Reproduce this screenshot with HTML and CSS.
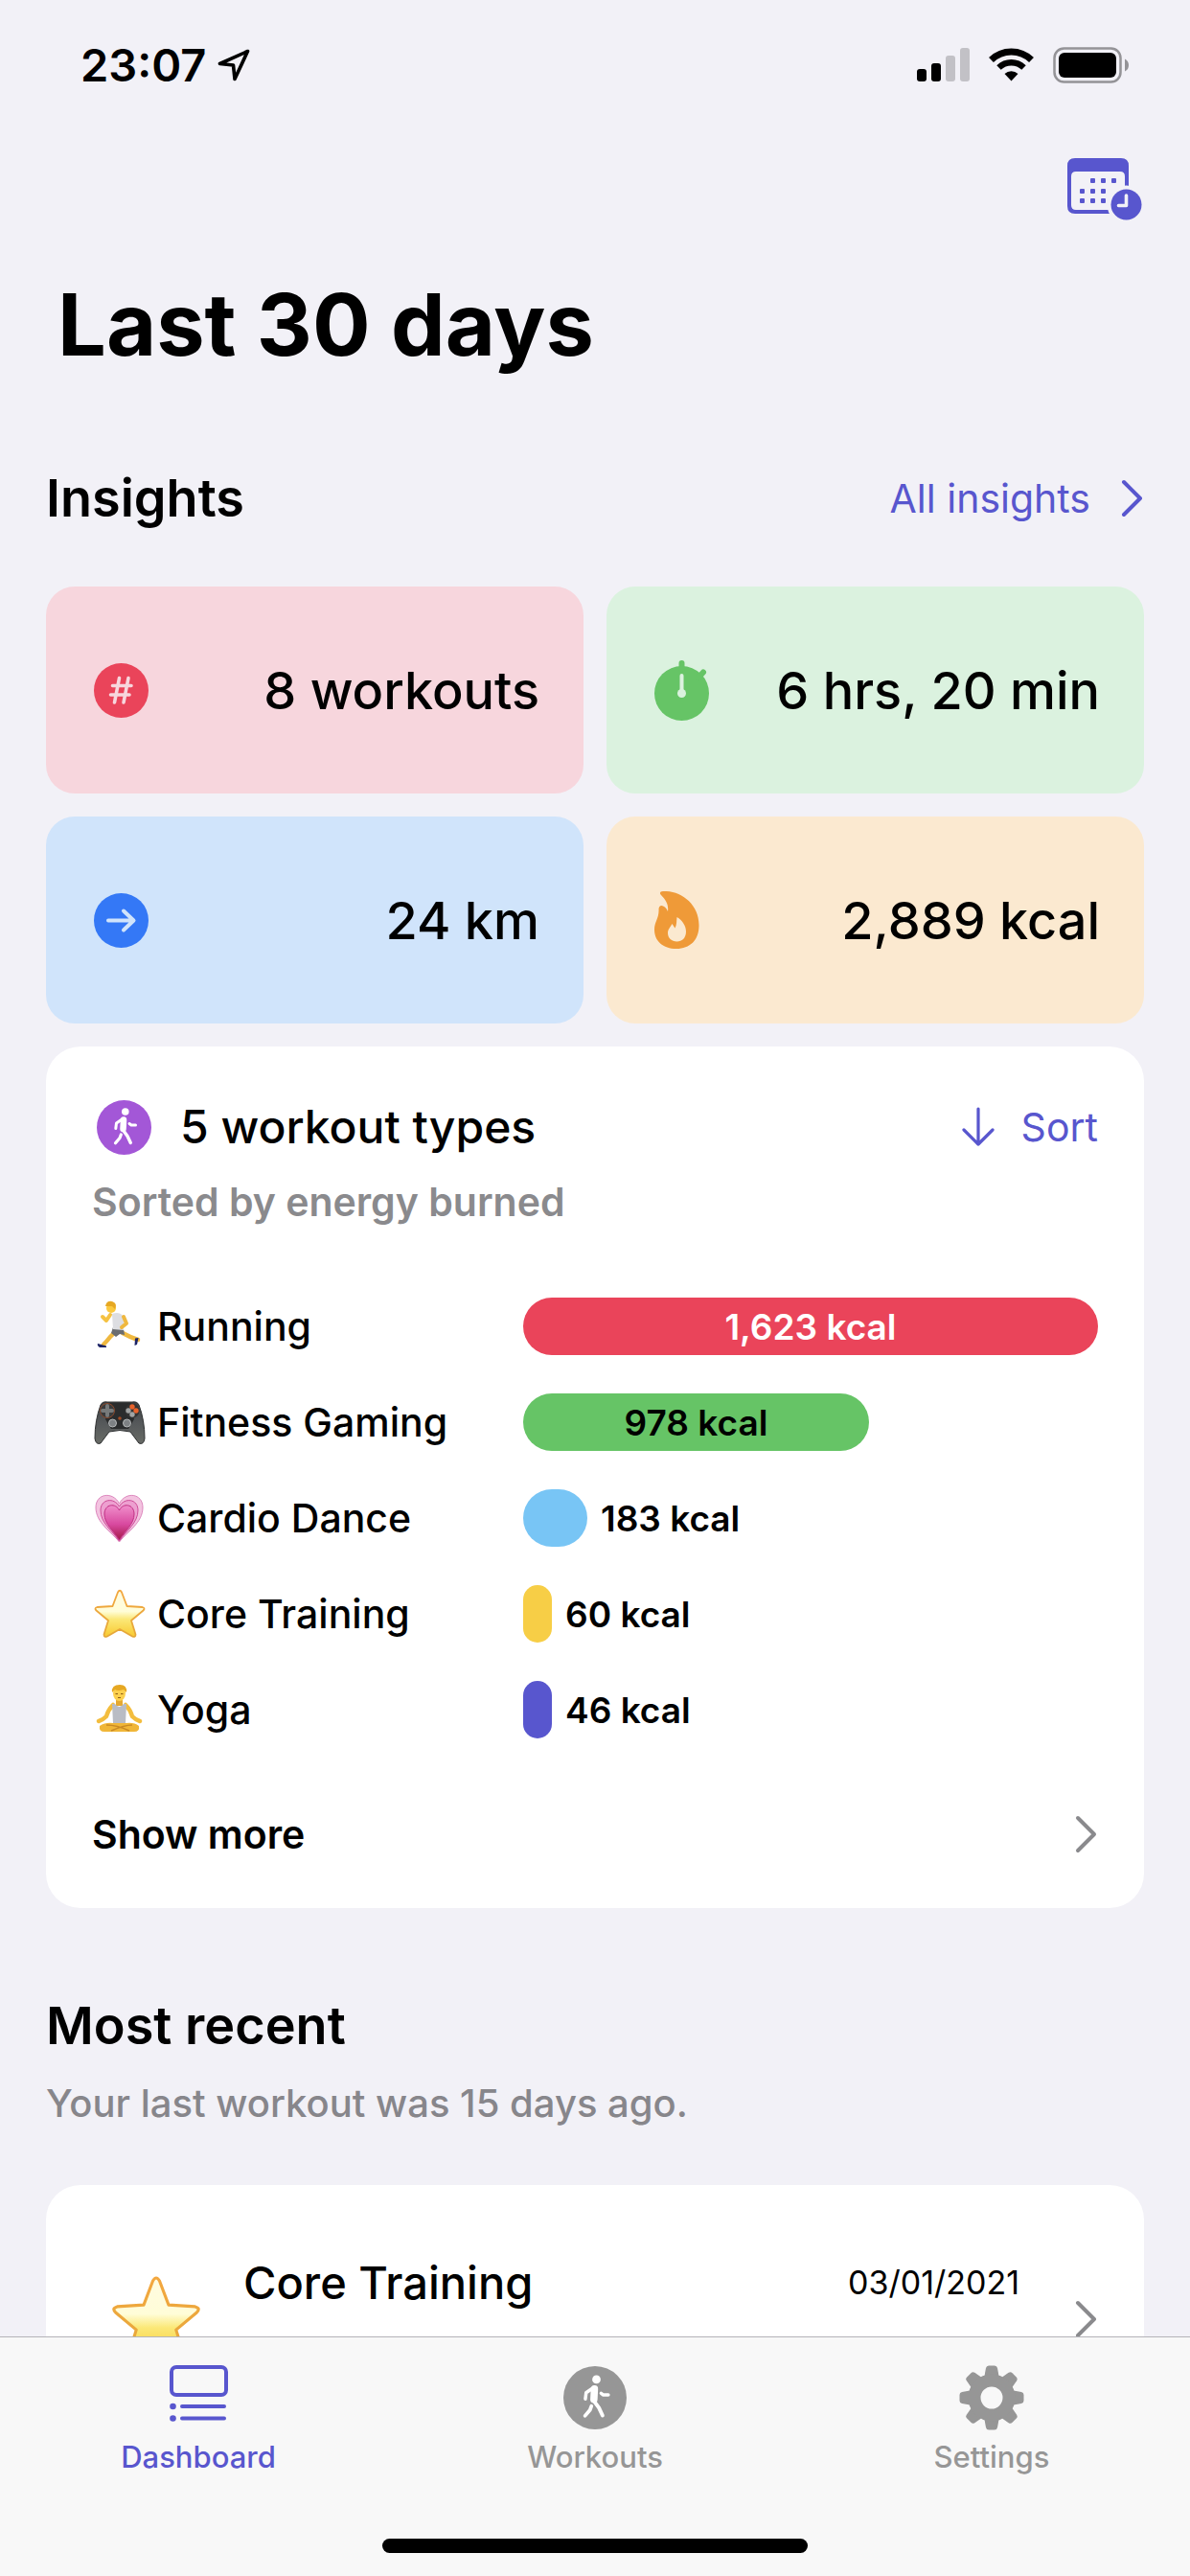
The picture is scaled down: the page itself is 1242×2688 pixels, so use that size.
FILE: index.html
```html
<!DOCTYPE html>
<html lang="en">
<head>
<meta charset="utf-8">
<meta name="viewport" content="width=device-width, initial-scale=1">
<title>Dashboard</title>
<link rel="stylesheet" href="styles.css">
</head>
<body>
<svg class="defs" aria-hidden="true">
  <defs>
    <linearGradient id="star-fill" x1="0" y1="0" x2="0" y2="1">
      <stop offset="0" stop-color="#fffbe0"/><stop offset=".45" stop-color="#fffdd8"/><stop offset=".62" stop-color="#fbe878"/><stop offset="1" stop-color="#f8c92f"/>
    </linearGradient>
    <linearGradient id="star-edge" x1="0" y1="0" x2="0" y2="1">
      <stop offset="0" stop-color="#f3a73f"/><stop offset="1" stop-color="#e5a83a"/>
    </linearGradient>
    <linearGradient id="heart-fill" x1="0" y1="0" x2="0" y2="1">
      <stop offset="0" stop-color="#f08ecb"/><stop offset=".55" stop-color="#d8499f"/><stop offset="1" stop-color="#a31745"/>
    </linearGradient>
    <linearGradient id="pad-fill" x1="0" y1="0" x2="0" y2="1">
      <stop offset="0" stop-color="#3c3f40"/><stop offset=".5" stop-color="#55585a"/><stop offset="1" stop-color="#686b66"/>
    </linearGradient>
    <symbol id="star" viewBox="0 0 54 52">
      <path d="M25 3.500 Q27 0 29 3.500 L34.500 18 L50.500 19 Q54 20 51.500 22.500 L39 33 L43.500 47.500 Q43.500 51 40 49.500 L27 42 L14 49.500 Q10.500 51 10.500 47.500 L15 33 L2.500 22.500 Q0 20 3.500 19 L19.500 18 Z" fill="url(#star-fill)" stroke="url(#star-edge)" stroke-width="1.800" stroke-linejoin="round"/>
    </symbol>
    <symbol id="walk" viewBox="0 0 57 57">
      <circle cx="28.500" cy="28.500" r="28.500" fill="currentColor"/>
      <g fill="none" stroke="#fff" stroke-linecap="round" stroke-linejoin="round">
        <circle cx="29.800" cy="12" r="3.800" fill="#fff" stroke="none"/>
        <path d="M28 20.500 L27.500 30" stroke-width="6.500"/>
        <path d="M25.500 20.500 L20.500 24 L19.800 29.500" stroke-width="3"/>
        <path d="M34 24.500 L36 26 L40.500 26" stroke-width="3"/>
        <path d="M28 32 L32 37.500 L35.300 44.500" stroke-width="3.400"/>
        <path d="M25.300 36 L24 39.500 L19.500 44.800" stroke-width="3.200"/>
      </g>
    </symbol>
    <symbol id="chevron" viewBox="0 0 24 40">
      <path d="M3 3 L20 20 L3 37" fill="none" stroke="currentColor" stroke-width="4" stroke-linecap="round" stroke-linejoin="round"/>
    </symbol>
  </defs>
</svg>

<div class="app">
  <div class="status">
    <div class="status-time">
      <span>23:07</span>
      <svg width="34" height="34" viewBox="0 0 34 34" aria-hidden="true"><path d="M31.500 2.500 L2.500 15.500 L16.500 17 L18 31.500 Z" fill="none" stroke="#000" stroke-width="3.600" stroke-linejoin="round"/></svg>
    </div>
    <svg width="222" height="38" viewBox="0 0 222 38" aria-hidden="true">
      <rect x="1" y="23" width="10" height="13" rx="3"/>
      <rect x="16" y="17" width="10" height="19" rx="3"/>
      <rect x="31" y="9" width="10" height="27" rx="3" fill="#c2c1c6"/>
      <rect x="46" y="1" width="10" height="35" rx="3" fill="#c2c1c6"/>
      <g fill="none" stroke="#000" stroke-width="7">
        <path d="M78.500 13.500 A30 30 0 0 1 120.500 13.500"/>
        <path d="M86.500 21.500 A19 19 0 0 1 112.500 21.500" stroke-width="6.500"/>
      </g>
      <path d="M92.500 28 A10.500 10.500 0 0 1 106.500 28 L99.500 35.500 Z"/>
      <rect x="144.500" y="1.500" width="69" height="35" rx="10" fill="none" stroke="#949397" stroke-width="2.500"/>
      <rect x="149" y="6" width="60" height="26" rx="6"/>
      <path d="M218 12.500 Q222 14.500 222 19 Q222 23.500 218 25.500 Z" fill="#949397"/>
    </svg>
  </div>

  <main class="content">
    <header class="head">
      <button class="icon-button" type="button" aria-label="Change period">
        <svg width="80" height="66" viewBox="0 0 80 66" aria-hidden="true">
          <path fill="#5856ce" fill-rule="evenodd" d="M8 0 H56 Q64 0 64 8 V50 Q64 58 56 58 H8 Q0 58 0 50 V8 Q0 0 8 0 Z M9 14 Q4 14 4 19 V49 Q4 54 9 54 H55 Q60 54 60 49 V19 Q60 14 55 14 Z"/>
          <g fill="#5856ce">
            <rect x="24" y="21" width="5" height="5" rx="1"/><rect x="35" y="21" width="5" height="5" rx="1"/><rect x="46" y="21" width="5" height="5" rx="1"/>
            <rect x="13" y="32" width="5" height="5" rx="1"/><rect x="24" y="32" width="5" height="5" rx="1"/><rect x="35" y="32" width="5" height="5" rx="1"/>
            <rect x="13" y="42" width="5" height="5" rx="1"/><rect x="24" y="42" width="5" height="5" rx="1"/><rect x="35" y="42" width="5" height="5" rx="1"/>
          </g>
          <circle cx="61.500" cy="48.500" r="20" fill="#f2f1f7"/>
          <circle cx="61.500" cy="48.500" r="16" fill="#5856ce"/>
          <path d="M61.500 39 V49.500 H53.500" fill="none" stroke="#f2f1f7" stroke-width="3.600" stroke-linecap="round" stroke-linejoin="round"/>
        </svg>
      </button>
      <h1>Last 30 days</h1>
    </header>

    <section class="insights">
      <div class="section-head">
        <h2>Insights</h2>
        <a class="link" href="#insights">All insights <svg class="chevron" aria-hidden="true"><use href="#chevron"/></svg></a>
      </div>
      <div class="tiles">
        <div class="tile tile-red">
          <svg width="57" height="57" viewBox="0 0 57 57" aria-hidden="true"><circle cx="28.500" cy="28.500" r="28.500" fill="#ea445a"/><path d="M26.500 15.500 L21.500 41 M36 15.500 L31 41 M19.500 23.500 H39 M17.500 33 H37" stroke="#f7d6dd" stroke-width="3.600" stroke-linecap="round" fill="none"/></svg>
          <span>8 workouts</span>
        </div>
        <div class="tile tile-green">
          <svg width="57" height="63" viewBox="0 0 57 63" aria-hidden="true"><circle cx="28.500" cy="34.500" r="28.500" fill="#66c466"/><path d="M28.500 3 V9 M51 12.500 L46 18" stroke="#66c466" stroke-width="6" stroke-linecap="round"/><path d="M28.500 16 V32" stroke="#dbf2df" stroke-width="4" stroke-linecap="round"/><circle cx="28.500" cy="34.500" r="4.500" fill="#dbf2df"/></svg>
          <span>6 hrs, 20 min</span>
        </div>
        <div class="tile tile-blue">
          <svg width="57" height="57" viewBox="0 0 57 57" aria-hidden="true"><circle cx="28.500" cy="28.500" r="28.500" fill="#3478f6"/><path d="M15 28.500 H41 M31 18.500 L41.500 28.500 L31 38.500" stroke="#d0e4fb" stroke-width="4" stroke-linecap="round" stroke-linejoin="round" fill="none"/></svg>
          <span>24 km</span>
        </div>
        <div class="tile tile-orange">
          <svg width="47" height="60" viewBox="0 0 47 60" aria-hidden="true"><path fill="#ef9a38" d="M9 0 C28 -1 47 14 46.500 36 C46.500 51 37 60 23 60 C9 60 0 52 0 40 C0 32 5 28 4.500 19 C4.500 13 11 14 14 21 C15 14 12 9 7 4 C5 2 6 0 9 0 Z"/><path fill="#fbe9d0" d="M23.500 27 C29 30 33 36 33 42 C33 49 28.500 52.500 23.500 52.500 C18 52.500 14 49 14 43.500 C14 39.500 17 37 18.500 34 L21.500 38.500 C23.500 35 23 31 23.500 27 Z"/></svg>
          <span>2,889 kcal</span>
        </div>
      </div>

      <div class="card types">
        <div class="types-head">
          <svg class="walk-icon" aria-hidden="true"><use href="#walk"/></svg>
          <h3>5 workout types</h3>
          <button class="link sort" type="button"><svg width="34" height="42" viewBox="0 0 34 42" aria-hidden="true"><path d="M17 2 V39 M2 24 L17 39 L32 24" fill="none" stroke="currentColor" stroke-width="3.200" stroke-linecap="round" stroke-linejoin="round"/></svg>Sort</button>
        </div>
        <p class="types-note">Sorted by energy burned</p>
        <ul class="rows">
          <li class="row">
            <svg class="emoji" viewBox="0 0 54 54" aria-hidden="true">
              <path d="M22 33 L17 38 Q14 42 10 46" fill="none" stroke="#efb83f" stroke-width="4.500" stroke-linecap="round" stroke-linejoin="round"/>
              <path d="M30 34 Q37 38 46 41" fill="none" stroke="#efb83f" stroke-width="4.500" stroke-linecap="round"/>
              <path d="M4 45 L13 47.500 V49 L6 49 Q3 47 4 45 Z M43 39.500 L46.500 39 L45 46 L42.500 47 Z" fill="#1c2466"/>
              <path d="M20 28 L31 30 L32 36 L27 35 L23 38 L18 34 Z" fill="#6b6d70"/>
              <path d="M19 14 Q27 11 31 17 L31 31 L20 30 Z" fill="#dddee2"/>
              <path d="M17 15 L13 21 L9 17" fill="none" stroke="#f5c242" stroke-width="4" stroke-linecap="round" stroke-linejoin="round"/>
              <path d="M31 17 L34 24 L29 28" fill="none" stroke="#efb83f" stroke-width="4" stroke-linecap="round" stroke-linejoin="round"/>
              <circle cx="18" cy="8" r="5" fill="#fbc93f"/><path d="M12 6 Q13 0 19 1 Q25 3 22 9 L19 6 Z" fill="#e6a823"/>
            </svg>
            <span class="label">Running</span>
            <span class="bar bar-red" style="width: 600px">1,623 kcal</span>
          </li>
          <li class="row">
            <svg class="emoji" viewBox="0 0 54 54" aria-hidden="true">
              <path d="M7 9 Q9 5 14 6 L40 6 Q45 5 47 9 Q53 25 53 44 Q52 51 47 49 L38 37 Q27 34 16 37 L7 49 Q2 51 1 44 Q1 25 7 9 Z" fill="url(#pad-fill)" stroke="#2e3031" stroke-width="1"/>
              <path d="M15 7 H39 L42 24 L36 34 H18 L12 24 Z" fill="#2a2c2d"/>
              <circle cx="14" cy="15" r="7.500" fill="#393b3c" stroke="#8b4a2c" stroke-width="1"/>
              <path d="M14 10 V20 M9 15 H19" stroke="#777a7a" stroke-width="4" stroke-linecap="round"/>
              <circle cx="40" cy="15" r="7.500" fill="#333"/>
              <circle cx="40" cy="11" r="2.700" fill="#e8622b"/><circle cx="44" cy="15" r="2.700" fill="#e8622b"/><circle cx="36" cy="15" r="2.700" fill="#a0a3a3"/><circle cx="40" cy="19" r="2.700" fill="#a0a3a3"/>
              <circle cx="19.500" cy="28" r="4" fill="#7d8184" stroke="#b5b8b9" stroke-width="1"/><circle cx="34.500" cy="28" r="4" fill="#7d8184" stroke="#b5b8b9" stroke-width="1"/>
              <circle cx="27" cy="23" r="1.800" fill="#a04a24"/>
            </svg>
            <span class="label">Fitness Gaming</span>
            <span class="bar bar-green" style="width: 361px">978 kcal</span>
          </li>
          <li class="row">
            <svg class="emoji" viewBox="0 0 54 54" aria-hidden="true">
              <path d="M26.500 52 C18 41 2 32 2 16 C2 1 20 -1 26.500 12 C33 -1 51 1 51 16 C51 32 35 41 26.500 52 Z" fill="#f3c3e0" stroke="#dd86bd" stroke-width="1"/>
              <path d="M26.500 51 C19 40 7 32 7 19 C7 7 21 5 26.500 15 C32 5 46 7 46 19 C46 32 34 40 26.500 51 Z" fill="#eda0d0" stroke="#cf4b98" stroke-width="1"/>
              <path d="M26.500 50 C20 40 11 33 11 23 C11 12 23 11 26.500 19 C30 11 42 12 42 23 C42 33 33 40 26.500 50 Z" fill="url(#heart-fill)" stroke="#c02f83" stroke-width="1"/>
            </svg>
            <span class="label">Cardio Dance</span>
            <span class="bar bar-sky" style="width: 67px"></span>
            <span class="value">183 kcal</span>
          </li>
          <li class="row">
            <svg class="emoji" aria-hidden="true"><use href="#star"/></svg>
            <span class="label">Core Training</span>
            <span class="bar bar-yellow" style="width: 30px"></span>
            <span class="value">60 kcal</span>
          </li>
          <li class="row">
            <svg class="emoji" viewBox="0 0 54 54" aria-hidden="true">
              <path d="M20 22 Q15 27 13 34 Q9 38 5 39 M33 22 Q38 27 40 34 Q44 38 48 39" fill="none" stroke="#f3bd3e" stroke-width="4.500" stroke-linecap="round"/>
              <path d="M6 44 Q12 40 20 41 H34 Q42 40 47 44 Q48 50 42 50 H11 Q5 50 6 44 Z" fill="#f0b638"/>
              <path d="M13 43 Q24 43 37 49 M40 43 Q32 43 18 49" fill="none" stroke="#c98a24" stroke-width="1.500"/>
              <path d="M23 15 H30 V23 H23 Z" fill="#e5a831"/>
              <path d="M19 21 H22 Q26.500 27 31 21 H34 L33 41 H20 Z" fill="#b9bcc4"/>
              <ellipse cx="26.500" cy="10" rx="6.500" ry="8" fill="#fcd04d"/>
              <path d="M19 9 Q18 1 27 1 Q35 1 34 9 L31 6 Q25 8 22 6 Z" fill="#e6a823"/>
              <path d="M22.500 10.500 H25 M28 10.500 H30.500 M25 14.500 H28" stroke="#8d5c14" stroke-width="1"/>
            </svg>
            <span class="label">Yoga</span>
            <span class="bar bar-indigo" style="width: 30px"></span>
            <span class="value">46 kcal</span>
          </li>
        </ul>
        <a class="more" href="#types">Show more <svg class="chevron" aria-hidden="true"><use href="#chevron"/></svg></a>
      </div>
    </section>

    <section class="recent">
      <h2>Most recent</h2>
      <p class="recent-note">Your last workout was 15 days ago.</p>
      <a class="card workout" href="#workout">
        <svg class="workout-icon" aria-hidden="true"><use href="#star"/></svg>
        <span class="workout-name">Core Training</span>
        <time datetime="2021-01-03">03/01/2021</time>
        <svg class="chevron" aria-hidden="true"><use href="#chevron"/></svg>
      </a>
    </section>
  </main>

  <nav class="tabs">
    <div class="tab-row">
      <a class="tab tab-active" href="#dashboard">
        <svg width="68" height="68" viewBox="0 0 68 68" aria-hidden="true"><g fill="none" stroke="currentColor" stroke-width="4" stroke-linecap="round"><rect x="6" y="2" width="57" height="29" rx="5"/><path d="M17 43 H61 M17 55.500 H61"/></g><circle cx="7.500" cy="43" r="3.300" fill="currentColor"/><circle cx="7.500" cy="55.500" r="3.300" fill="currentColor"/></svg>
        Dashboard
      </a>
      <a class="tab" href="#workouts">
        <svg class="tab-walk" aria-hidden="true"><use href="#walk"/></svg>
        Workouts
      </a>
      <a class="tab" href="#settings">
        <svg width="68" height="68" viewBox="-34 -34 68 68" aria-hidden="true">
          <g fill="currentColor">
            <path id="tooth" d="M-8 -20 L-6 -31 Q-5.500 -33.500 -3 -33.500 H3 Q5.500 -33.500 6 -31 L8 -20 Z"/>
            <use href="#tooth" transform="rotate(45)"/><use href="#tooth" transform="rotate(90)"/><use href="#tooth" transform="rotate(135)"/><use href="#tooth" transform="rotate(180)"/><use href="#tooth" transform="rotate(225)"/><use href="#tooth" transform="rotate(270)"/><use href="#tooth" transform="rotate(315)"/>
          </g>
          <circle r="18" fill="none" stroke="currentColor" stroke-width="13"/>
        </svg>
        Settings
      </a>
    </div>
    <div class="home-bar"></div>
  </nav>
</div>
</body>
</html>
```
FILE: styles.css
```css
* { box-sizing: border-box; }

body {
  margin: 0;
  background: #f2f1f7;
  color: #000;
  font-family: Inter, "Liberation Sans", sans-serif;
}

h1, h2, h3, p, ul { margin: 0; padding: 0; }
ul { list-style: none; }
a { color: inherit; text-decoration: none; }
svg { display: block; flex: none; }
button { border: 0; padding: 0; background: none; font: inherit; cursor: pointer; }

.defs { position: absolute; width: 0; height: 0; }

.app { display: flex; flex-direction: column; height: 100vh; }

.status {
  display: flex;
  justify-content: space-between;
  align-items: center;
  padding: 36px 64px 0 84px;
}
.status-time {
  display: flex;
  align-items: center;
  gap: 12px;
  font-size: 47px;
  line-height: 64px;
  font-weight: 600;
}

.content {
  flex: 1;
  min-height: 0;
  overflow-y: auto;
  scrollbar-width: none;
  padding: 65px 48px 0;
}

.head { display: flex; flex-direction: column; }
.icon-button { align-self: flex-end; height: 66px; }
h1 {
  padding: 52px 12px 0;
  font-size: 90px;
  line-height: 112px;
  font-weight: 700;
}

.section-head {
  display: flex;
  justify-content: space-between;
  align-items: center;
  padding-top: 90px;
}
h2 { font-size: 54px; line-height: 70px; font-weight: 600; }
.link { display: flex; align-items: center; gap: 32px; color: #5856ce; font-size: 41px; line-height: 56px; }
.chevron { width: 24px; height: 40px; }

.tiles {
  display: grid;
  grid-template-columns: 1fr 1fr;
  gap: 24px;
  margin: 57px 0 24px;
}
.tile {
  display: flex;
  align-items: center;
  justify-content: space-between;
  height: 216px;
  padding: 0 46px 0 50px;
  border-radius: 30px;
  font-size: 54px;
  font-weight: 500;
}
.tile-red { background: #f7d6dd; }
.tile-green { background: #dbf2df; }
.tile-blue { background: #d0e4fb; }
.tile-orange { background: #fbe9d0; }

.card { background: #fff; border-radius: 36px; }

.types { padding: 48px 48px 47px; }
.types-head { display: flex; align-items: center; padding-left: 5px; }
.walk-icon { width: 57px; height: 57px; color: #a357d7; }
h3 { flex: 1; padding-left: 30px; font-size: 48px; line-height: 72px; font-weight: 500; }
.sort { gap: 28px; }
.types-note { padding-top: 14px; color: #8a8a8d; font-size: 41px; line-height: 56px; font-weight: 600; }

.rows { display: flex; flex-direction: column; gap: 40px; padding: 72px 0 70px; }
.row { display: flex; align-items: center; height: 60px; }
.emoji { width: 54px; height: 54px; margin: 0 12px 0 2px; }
.label { flex: none; width: 382px; font-size: 41px; font-weight: 500; }
.bar {
  display: flex;
  align-items: center;
  justify-content: center;
  flex: none;
  height: 60px;
  border-radius: 30px;
  font-size: 37px;
  font-weight: 600;
}
.bar-red { background: #ea445a; color: #fff; }
.bar-green { background: #66c466; }
.bar-sky { background: #78c5f5; }
.bar-yellow { background: #f7ce46; }
.bar-indigo { background: #5856ce; }
.value { padding-left: 14px; font-size: 37px; font-weight: 600; }

.more { display: flex; justify-content: space-between; align-items: center; font-size: 41px; line-height: 60px; font-weight: 600; }
.more .chevron, .workout .chevron { color: #8a8a8d; }

.recent { padding-top: 88px; }
.recent-note { padding-top: 18px; color: #87868b; font-size: 40px; line-height: 56px; font-weight: 500; }
.workout {
  display: flex;
  height: 280px;
  margin-top: 57px;
  padding: 72px 48px 0 68px;
}
.workout-icon { width: 94px; height: 90px; margin-top: 22px; }
.workout-name { flex: 1; padding-left: 44px; font-size: 47px; line-height: 60px; font-weight: 500; }
.workout time { padding-right: 58px; font-size: 34px; line-height: 60px; }
.workout .chevron { margin-top: 48px; }

.tabs { border-top: 1px solid #b4b3b8; background: #f8f8f8; }
.tab-row { display: grid; grid-template-columns: 1fr 1fr 1fr; padding: 29px 0 65px; }
.tab {
  display: flex;
  flex-direction: column;
  align-items: center;
  gap: 8px;
  color: #969696;
  font-size: 31px;
  line-height: 40px;
  font-weight: 500;
}
.tab-active { color: #5856ce; }
.tab-walk { width: 66px; height: 68px; }
.home-bar { width: 444px; height: 15px; margin: 0 auto 24px; border-radius: 8px; background: #000; }
```
